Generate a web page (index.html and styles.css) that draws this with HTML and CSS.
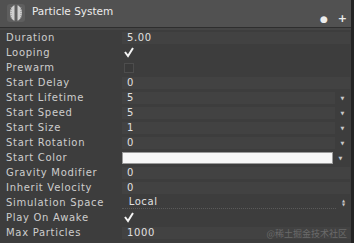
FILE: index.html
```html
<!DOCTYPE html>
<html>
<head>
  <title>Particle System</title>
  <link rel="stylesheet" href="styles.css">
</head>
<body>

<div id="panel">
  <div class="header">
    <svg class="ps-icon" width="20" height="20" viewBox="0 0 20 20">
      <rect x="1" y="1" width="18" height="18" rx="3" fill="#5e5e5e"/>
      <ellipse cx="10" cy="10" rx="6" ry="8" fill="#cfcfcf"/>
      <rect x="8.5" y="2" width="3" height="16" fill="#5e5e5e"/>
      <path d="M5 4 L5 16 M15 4 L15 16" stroke="#8a8a8a" stroke-width="1" stroke-dasharray="1 1"/>
    </svg>
    <span class="title">Particle System</span>
    <span class="tools">
      <span class="help">&#9679;</span>
      <span class="gear">+</span>
    </span>
  </div>

  <div class="rows">
    <div class="row"><span class="label">Duration</span><span class="field full">5.00</span></div>
    <div class="row"><span class="label">Looping</span>
      <svg class="check" width="12" height="12" viewBox="0 0 12 12"><path d="M2 6 L5 10 L10 2" fill="none" stroke="#f4f4f4" stroke-width="2"/></svg></div>
    <div class="row"><span class="label">Prewarm</span><span class="box"></span></div>
    <div class="row"><span class="label">Start Delay</span><span class="field full">0</span></div>
    <div class="row"><span class="label">Start Lifetime</span><span class="field">5</span><span class="arrow">&#9660;</span></div>
    <div class="row"><span class="label">Start Speed</span><span class="field">5</span><span class="arrow">&#9660;</span></div>
    <div class="row"><span class="label">Start Size</span><span class="field">1</span><span class="arrow">&#9660;</span></div>
    <div class="row"><span class="label">Start Rotation</span><span class="field">0</span><span class="arrow">&#9660;</span></div>
    <div class="row"><span class="label">Start Color</span><span class="field color"></span><span class="arrow">&#9660;</span></div>
    <div class="row"><span class="label">Gravity Modifier</span><span class="field full">0</span></div>
    <div class="row"><span class="label">Inherit Velocity</span><span class="field full">0</span></div>
    <div class="row"><span class="label">Simulation Space</span><span class="field popup">Local</span><span class="updown">&#9650;<br>&#9660;</span></div>
    <div class="row"><span class="label">Play On Awake</span>
      <svg class="check" width="12" height="12" viewBox="0 0 12 12"><path d="M2 6 L5 10 L10 2" fill="none" stroke="#f4f4f4" stroke-width="2"/></svg></div>
    <div class="row"><span class="label">Max Particles</span><span class="field full">1000</span></div>
  </div>

  <div class="watermark">@稀土掘金技术社区</div>
</div>

</body>
</html>
```

FILE: styles.css
```css
body {
  margin: 0;
  padding: 0;
  background-color: #3c3c3c;
  font-family: "DejaVu Sans", sans-serif;
  font-size: 10px;
  color: #cdcdcd;
}

#panel {
  width: 351px;
  height: 243px;
  background-color: #3d3d3d;
  border-right: 3px solid #232323;
  position: relative;
  overflow: hidden;
}

.header {
  height: 27px;
  background-color: #515151;
  border-bottom: 1px solid #2e2e2e;
  display: flex;
  align-items: center;
  padding-left: 6px;
  box-shadow: 0 2px 0 #454545;
}

.ps-icon {
  margin-right: 6px;
  margin-top: -1px;
}

.title {
  color: #ececec;
  font-size: 10.5px;
  margin-top: -5px;
}

.tools {
  margin-left: auto;
  display: flex;
  align-items: center;
  gap: 10px;
  margin-top: 10px;
  padding-right: 4px;
  font-size: 9px;
  color: #ececec;
}

.gear {
  font-weight: bold;
  font-size: 11px;
}

.rows {
  padding-top: 2px;
}

.row {
  height: 15px;
  display: flex;
  align-items: center;
}

.label {
  width: 116px;
  padding-left: 6px;
  letter-spacing: 0.7px;
}

.field {
  height: 12px;
  line-height: 12px;
  background-color: #424242;
  width: 208px;
  padding-left: 5px;
  letter-spacing: 0.6px;
  color: #e0e0e0;
}

.field.full {
  width: 223px;
}

.field.color {
  background-color: #f7f7f7;
  border: 1px solid #9a9a9a;
  height: 10px;
  width: 204px;
}

.field.popup {
  background-color: transparent;
  padding-left: 7px;
  border-bottom: 1px dotted #5a5a5a;
}

.arrow {
  width: 15px;
  text-align: center;
  font-size: 5px;
  color: #c8c8c8;
}

.updown {
  width: 15px;
  text-align: center;
  font-size: 4px;
  line-height: 4px;
  color: #c8c8c8;
}

.check {
  margin-left: 1px;
  margin-top: -1px;
}

.box {
  width: 8px;
  height: 8px;
  margin-left: 2px;
  border: 1px solid #4d4d4d;
  background-color: #3a3a3a;
}

.watermark {
  position: absolute;
  right: 4px;
  bottom: 3px;
  font-family: "Noto Sans CJK SC", sans-serif;
  font-size: 9px;
  color: #6a6a6a;
}
```
